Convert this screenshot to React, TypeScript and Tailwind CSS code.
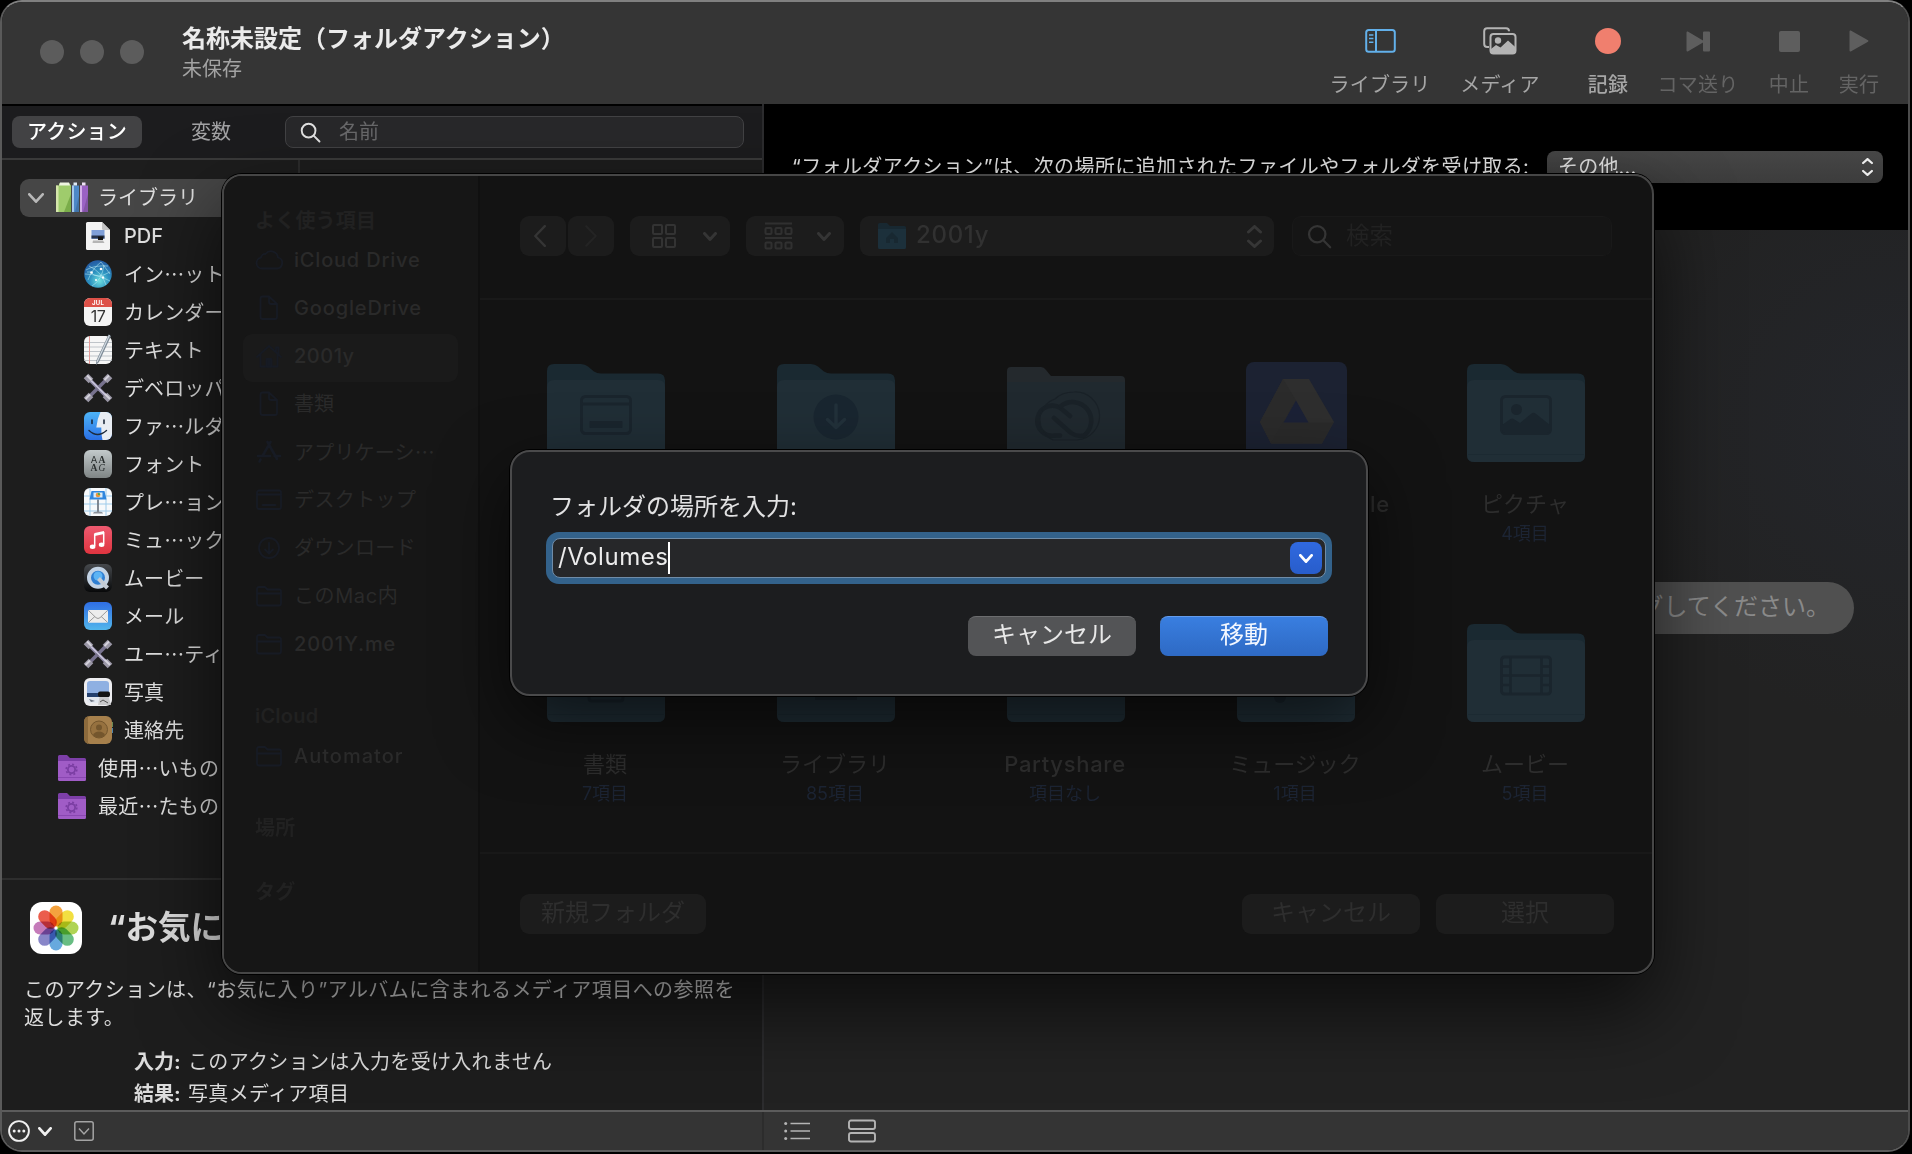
import React from "react";

const UI = "font-['Inter','Noto_Sans_CJK_JP',sans-serif]";
const JP = "font-['Noto_Sans_CJK_JP',sans-serif]";

/* ---------- small shared glyphs ---------- */

function Magnifier({ size, color, w = 2 }: { size: number; color: string; w?: number }) {
  return (
    <svg width={size} height={size} viewBox="0 0 22 22" fill="none" stroke={color} strokeWidth={w} strokeLinecap="round">
      <circle cx="9" cy="9" r="7.2" />
      <path d="M14.3 14.3 20.4 20.4" />
    </svg>
  );
}

function Chevron({ w, h, color, sw }: { w: number; h: number; color: string; sw: number }) {
  return (
    <svg width={w} height={h} viewBox={`0 0 ${w} ${h}`} fill="none" stroke={color} strokeWidth={sw} strokeLinecap="round" strokeLinejoin="round">
      <path d={`M${sw / 2} ${sw / 2} L${w / 2} ${h - sw / 2} L${w - sw / 2} ${sw / 2}`} />
    </svg>
  );
}

function UpDown({ w, h, color, sw }: { w: number; h: number; color: string; sw: number }) {
  const m = w / 2;
  return (
    <svg width={w} height={h} viewBox={`0 0 ${w} ${h}`} fill="none" stroke={color} strokeWidth={sw} strokeLinecap="round" strokeLinejoin="round">
      <path d={`M${sw / 2} ${m - 0.5} L${m} ${sw / 2} L${w - sw / 2} ${m - 0.5} M${sw / 2} ${h - m + 0.5} L${m} ${h - sw / 2} L${w - sw / 2} ${h - m + 0.5}`} />
    </svg>
  );
}

/* ---------- window toolbar ---------- */

const tools = [
  {
    label: "ライブラリ",
    cls: "w-[100px] mr-[30px] text-[#a6a6a6]",
    icon: (
      <svg width="31" height="24" viewBox="0 0 31 24" fill="none" stroke="#62b0ea" strokeWidth="2">
        <rect x="1.2" y="1" width="28.6" height="21.8" rx="2.5" />
        <path d="M11 1V23" />
        <path d="M4 6h4.4M4 9.6h4.4M4 13.2h4.4" strokeWidth="1.5" />
      </svg>
    ),
  },
  {
    label: "メディア",
    cls: "w-[80px] mr-[48px] text-[#a6a6a6]",
    icon: (
      <svg width="34" height="28" viewBox="0 0 34 28" fill="none">
        <path d="M6 20H4.2A3 3 0 0 1 1.2 17V4.2a3 3 0 0 1 3-3H23a3 3 0 0 1 3 3" stroke="#b4b4b4" strokeWidth="2" />
        <rect x="7.5" y="7" width="25" height="19.5" rx="3" stroke="#b4b4b4" strokeWidth="2" />
        <circle cx="15" cy="13.5" r="3.2" fill="#b4b4b4" />
        <path d="M8 24.5V22l5-4 4.5 2.5 7.5-7 7.5 6.8V24.5a2 2 0 0 1-2 2H10a2 2 0 0 1-2-2z" fill="#b4b4b4" />
      </svg>
    ),
  },
  {
    label: "記録",
    cls: "w-[40px] mr-[30px] text-[#a6a6a6] font-medium",
    icon: <div className="size-[26px] rounded-full bg-[#f07f6e]" />,
  },
  {
    label: "コマ送り",
    cls: "w-[80px] mr-[31px] text-[#646464]",
    icon: (
      <svg width="25" height="21" viewBox="0 0 25 21" fill="#5e5e5e">
        <path d="M.5 1.6C.5.5 1.3.2 2.2.8L17 9.6V1.6q0-1 1-1h5q1 0 1 1v17.8q0 1-1 1h-5q-1 0-1-1V11.400L2.200 20.200C1.300 20.800.5 20.500.5 19.400z" />
      </svg>
    ),
  },
  {
    label: "中止",
    cls: "w-[40px] mr-[30px] text-[#646464]",
    icon: <div className="size-[21px] rounded-[2px] bg-[#5e5e5e]" />,
  },
  {
    label: "実行",
    cls: "w-[40px] text-[#646464]",
    icon: (
      <svg width="20" height="22" viewBox="0 0 20 22" fill="#5e5e5e">
        <path d="M.5 1.6C.5.500 1.300.2 2.200.8L19 10.200q1 .8 0 1.600L2.200 21.200C1.300 21.800.5 21.500.5 20.400z" />
      </svg>
    ),
  },
];

function TitleBar() {
  return (
    <header className="flex h-[102px] shrink-0 items-start bg-[#353535]">
      <div className="flex gap-4 pl-[38px] pt-[38px]">
        {[0, 1, 2].map((i) => (
          <div key={i} className="size-6 rounded-full bg-[#5c5c5c]" />
        ))}
      </div>
      <div className="ml-[38px] pt-5">
        <div className="h-8 text-[24px] leading-[34px] font-bold text-[#ebebeb]">名称未設定（フォルダアクション）</div>
        <div className="mt-px text-[20px] leading-[28px] text-[#a3a3a3]">未保存</div>
      </div>
      <div className="ml-auto flex pr-[29px]">
        {tools.map((t) => (
          <div key={t.label} className={`flex flex-col items-center whitespace-nowrap ${t.cls}`}>
            <div className="mt-6 flex h-[30px] items-center">{t.icon}</div>
            <div className="mt-[13px] text-[20px] leading-[32px] tracking-[0.2px]">{t.label}</div>
          </div>
        ))}
      </div>
    </header>
  );
}

/* ---------- library icons ---------- */

const Svg = ({ children, w = 28, h = 28 }: { children: React.ReactNode; w?: number; h?: number }) => (
  <svg width={w} height={h} viewBox={`0 0 ${w} ${h}`} fill="none" className="shrink-0 overflow-visible">
    {children}
  </svg>
);

const BooksIcon = () => (
  <Svg w={32} h={32}>
    <path d="M3 1.500h10V30H3z" fill="#8fc25c" />
    <path d="M0 3.500h3l1-2.500h9l2 2.500V30H0z" fill="#9fcc6c" />
    <path d="M0 3.500h2.500V30H0z" fill="#d5e6ac" />
    <path d="M15 12 8 30h7z" fill="#6ba03c" opacity=".7" />
    <path d="M4 .5h9l1 3H3z" fill="#eef4e0" />
    <path d="M16 3.500h7V30h-7z" fill="#4c88c6" />
    <path d="M16 3.500h2V30h-2z" fill="#a5c8ec" />
    <path d="M17.500.5h3.500v3h-3.500z" fill="#dfeaf6" />
    <path d="M24 3.500h8V30h-8z" fill="#9a62c4" />
    <path d="M24 3.500h2V30h-2z" fill="#d2afe8" />
    <path d="M26 .5h3.500v3H26z" fill="#efe2f6" />
    <path d="M32 12 27 30h5zM23 14l-4 16h4z" fill="#000" opacity=".15" />
  </Svg>
);

const PdfIcon = () => (
  <Svg>
    <path d="M2 1.500Q2 0 3.500 0H18l8 8v18.500q0 1.500-1.500 1.500h-21Q2 28 2 26.500z" fill="#f3f3f3" />
    <path d="M18 0v6.500Q18 8 19.500 8H26z" fill="#c4c4c4" />
    <rect x="7.500" y="8" width="13" height="9" fill="#7f9fd8" />
    <path d="M7.500 13.500h13v3h-13z" fill="#27344c" />
    <path d="M9 18.500h10l1.500 2.500h-12z" fill="#b5b5b5" />
    <path d="M14 14.500h5v3.500h-5z" fill="#151515" />
  </Svg>
);

const GlobeIcon = () => (
  <Svg>
    <defs>
      <radialGradient id="globe" cx=".55" cy=".75" r=".7">
        <stop offset="0" stopColor="#6fe0e0" />
        <stop offset=".5" stopColor="#2d93c0" />
        <stop offset="1" stopColor="#2560a6" />
      </radialGradient>
    </defs>
    <circle cx="14" cy="14" r="13.800" fill="url(#globe)" />
    <path
      d="M2 10Q10 5 24 6M4 20Q8 9 17 2M8 26Q18 20 20 5M1 14Q13 14 26 21M5 6Q18 12 22 25M7 12Q12 20 26 12M3 12l4 0M17 2q6 8 9 12"
      stroke="#bdeef6"
      strokeWidth=".7"
      opacity=".75"
    />
    <g fill="#fff">
      <circle cx="7.500" cy="12.500" r="1.300" />
      <circle cx="17" cy="9" r="1.300" />
      <circle cx="19" cy="17.500" r="1.200" />
      <circle cx="12" cy="20" r="1" />
    </g>
  </Svg>
);

const CalendarIcon = () => (
  <div className="flex size-7 shrink-0 flex-col items-center overflow-hidden rounded-[6px] bg-[#f4f4f4]">
    <div className="flex h-[9px] w-full shrink-0 items-center justify-center bg-[#dd5148] text-[6px] leading-none font-bold tracking-[0.3px] text-white">JUL</div>
    <div className="text-[16px] leading-[18px] tracking-[-0.5px] text-[#333]">17</div>
  </div>
);

const TextEditIcon = () => (
  <Svg>
    <rect width="28" height="28" rx="6" fill="#f6f6f6" />
    <path d="M0 6.500h28M0 11h28M0 15.500h28M0 20h28M0 24.500h28" stroke="#b9bec4" strokeWidth=".9" />
    <path d="M5.500 0v28" stroke="#e29a97" />
    <path d="M24.500-1.500 27 0 15 26l-3 3 .3-4.500z" fill="#7d8a96" />
    <path d="M25.500-1 13 26" stroke="#d5dde4" strokeWidth="1.100" />
  </Svg>
);

const WrenchIcon = () => (
  <Svg>
    <path d="M4 4 24 24" stroke="#8d88a4" strokeWidth="3.600" />
    <path d="M24 4 4 24" stroke="#77728e" strokeWidth="3.600" />
    <path d="M4 3.500 24 23.500" stroke="#cfcbe0" strokeWidth="1.200" />
    <g stroke="#9a97a6" strokeWidth="6.500">
      <path d="M2 2l5 5M26 2l-5 5M2 26l5-5M26 26l-5-5" />
    </g>
    <g stroke="#d4d2dc" strokeWidth="2">
      <path d="M3 1.500l4.500 4.500M25 1.500l-4.500 4.500M1.500 25l4.500-4.500M21 20l5 5" />
    </g>
  </Svg>
);

const FinderIcon = () => (
  <Svg>
    <defs>
      <linearGradient id="fnd" x1="0" y1="0" x2="0" y2="1">
        <stop offset="0" stopColor="#4db4f8" />
        <stop offset="1" stopColor="#2a6fe4" />
      </linearGradient>
      <clipPath id="fndc">
        <rect width="28" height="28" rx="6" />
      </clipPath>
    </defs>
    <g clipPath="url(#fndc)">
      <rect width="28" height="28" fill="url(#fnd)" />
      <path d="M16.500 0Q13 7 12.300 15.500h5Q17 22 18.500 28H28V0z" fill="#e8edf3" />
      <path d="M8 8v3.500M20 8v3.500" stroke="#1c2a3c" strokeWidth="1.600" strokeLinecap="round" />
      <path d="M5 18.500Q13.500 26.500 22.500 18.500" stroke="#1c2a3c" strokeWidth="1.400" strokeLinecap="round" />
    </g>
  </Svg>
);

const FontBookIcon = () => (
  <div className="grid size-7 shrink-0 grid-cols-2 content-center justify-items-center rounded-[6px] bg-linear-to-b from-[#c3cacb] to-[#7f8585] px-[6px] text-[9.500px] leading-[8.500px] text-[#2b3030]">
    <span>A</span>
    <span className="font-['Liberation_Serif',serif] font-bold">A</span>
    <span className="font-['Liberation_Serif',serif] font-bold">A</span>
    <span className="font-['Liberation_Serif',serif] italic">G</span>
  </div>
);

const KeynoteIcon = () => (
  <Svg>
    <rect width="28" height="28" rx="6" fill="#f7f9fb" />
    <path d="M0 8h28M0 16h28M0 23h28M6 0v28M22 0v28" stroke="#9ecbea" strokeWidth="1" />
    <path d="M7.500 3h13l2 8.500H5.500z" fill="#2f86de" />
    <rect x="9.500" y="4.500" width="9" height="5" fill="#dcebf8" />
    <circle cx="14" cy="7" r="2.300" fill="#e9953a" />
    <path d="M14 4.700A2.300 2.300 0 0 1 16.300 7H14z" fill="#4caa52" />
    <path d="M14 11.500V24" stroke="#747c86" strokeWidth="1.800" />
    <path d="M9 25.500q0-2 5-2t5 2z" fill="#8b929b" />
  </Svg>
);

const MusicIcon = () => (
  <Svg>
    <defs>
      <linearGradient id="mus" x1="0" y1="0" x2="0" y2="1">
        <stop offset="0" stopColor="#ee5a70" />
        <stop offset="1" stopColor="#e0343f" />
      </linearGradient>
    </defs>
    <rect width="28" height="28" rx="6" fill="url(#mus)" />
    <path d="M10.700 7 20 5v3l-9.300 2z" fill="#fff" />
    <path d="M10.700 7.500V20M19.700 6v12" stroke="#fff" strokeWidth="1.500" />
    <ellipse cx="8.600" cy="20.700" rx="2.800" ry="2.200" fill="#fff" />
    <ellipse cx="17.600" cy="18.700" rx="2.800" ry="2.200" fill="#fff" />
  </Svg>
);

const QuickTimeIcon = () => (
  <Svg>
    <defs>
      <linearGradient id="qt" x1="0" y1="0" x2="0" y2="1">
        <stop offset="0" stopColor="#46494d" />
        <stop offset="1" stopColor="#08090a" />
      </linearGradient>
    </defs>
    <rect width="28" height="28" rx="6" fill="url(#qt)" />
    <circle cx="14" cy="13.800" r="9" fill="#2f7fd2" stroke="#c3d3e4" strokeWidth="4" />
    <circle cx="14" cy="12" r="4.500" fill="#5cb4f4" />
    <path d="M14.500 14.500 23.500 24" stroke="#c3cbd4" strokeWidth="4" />
  </Svg>
);

const MailIcon = () => (
  <Svg>
    <defs>
      <linearGradient id="mail" x1="0" y1="0" x2="0" y2="1">
        <stop offset="0" stopColor="#2f6ee4" />
        <stop offset="1" stopColor="#52b6ec" />
      </linearGradient>
    </defs>
    <rect width="28" height="28" rx="6" fill="url(#mail)" />
    <rect x="4" y="8" width="20" height="12.800" rx="1.500" fill="#ececec" />
    <path d="m4.500 8.500 7.500 7.200q2 1.600 4 0l7.500-7.200M4.500 20.300l6.500-6M23.500 20.300l-6.500-6" stroke="#9a9a9a" strokeWidth="1" />
  </Svg>
);

const PreviewIcon = () => (
  <Svg>
    <rect width="28" height="28" rx="6" fill="#ededf0" />
    <path d="M3 6q0-3 3-3h16q3 0 3 3v10H3z" fill="#8fb0e2" />
    <path d="M3 15h22v5H3z" fill="#24406e" />
    <path d="M3 19h22v3q0 3-3 3H6q-3 0-3-3z" fill="#e3e8f0" />
    <path d="M5 21l6 2-4 1zM9 19l5 2" fill="#6d7684" />
    <rect x="14" y="13.500" width="12" height="5.500" rx="2" fill="#141414" />
    <path d="M15.500 19h9l2.500 8H14z" fill="#c9c9cb" />
    <path d="m16 24 3-2 5 3" stroke="#555" />
  </Svg>
);

const ContactsIcon = () => (
  <Svg>
    <path d="M26 6h3v5h-3z" fill="#6a8a56" />
    <path d="M26 12h3v5h-3z" fill="#4d84ac" />
    <rect width="28" height="28" rx="6" fill="#a6804c" />
    <path d="M0 6q0-6 6-6h-2v28h2q-6 0-6-6z" fill="#8c6a3c" />
    <circle cx="15" cy="13.500" r="8.500" fill="#96713f" stroke="#74562d" strokeWidth="1" />
    <circle cx="15" cy="11.500" r="3" fill="#74562d" />
    <path d="M9 19q1.500-3.600 6-3.600t6 3.600q-2.500 2.800-6 2.800T9 19z" fill="#74562d" />
  </Svg>
);

const SmartFolderIcon = () => (
  <Svg w={28} h={26}>
    <path d="M0 1.500Q0 0 1.500 0H9l3 3h14.500Q28 3 28 4.500V24q0 2-1.500 2h-25Q0 26 0 24z" fill="#7d3fa8" />
    <path d="M0 6h28v18q0 2-1.500 2h-25Q0 26 0 24z" fill="#a05cc6" />
    <path d="M0 22.500h28" stroke="#8a47b2" />
    <circle cx="13.500" cy="14.500" r="3.600" stroke="#7b3ea3" strokeWidth="1.800" />
    <circle cx="13.500" cy="14.500" r="5.300" stroke="#7b3ea3" strokeWidth="1.600" strokeDasharray="2 2.160" />
  </Svg>
);

const library: { icon: React.ReactNode; label: string; latin?: boolean }[] = [
  { icon: <PdfIcon />, label: "PDF", latin: true },
  { icon: <GlobeIcon />, label: "イン…ット" },
  { icon: <CalendarIcon />, label: "カレンダー" },
  { icon: <TextEditIcon />, label: "テキスト" },
  { icon: <WrenchIcon />, label: "デベロッパ" },
  { icon: <FinderIcon />, label: "ファ…ルダ" },
  { icon: <FontBookIcon />, label: "フォント" },
  { icon: <KeynoteIcon />, label: "プレ…ョン" },
  { icon: <MusicIcon />, label: "ミュ…ック" },
  { icon: <QuickTimeIcon />, label: "ムービー" },
  { icon: <MailIcon />, label: "メール" },
  { icon: <WrenchIcon />, label: "ユー…ティ" },
  { icon: <PreviewIcon />, label: "写真" },
  { icon: <ContactsIcon />, label: "連絡先" },
];

const petals = ["#f39a2d", "#f1dd31", "#a9cf46", "#5bb878", "#5aa2dc", "#7e7cc4", "#c070b4", "#ea4f3c"];

function PhotosIcon() {
  return (
    <svg width="52" height="52" viewBox="0 0 52 52" className="shrink-0">
      <rect width="52" height="52" rx="12" fill="#fff" />
      <g className="isolate">
        {petals.map((c, i) => (
          <rect key={c} x="19.500" y="3.500" width="13" height="21" rx="6.500" fill={c} opacity=".92" transform={`rotate(${i * 45} 26 26)`} className="mix-blend-multiply" />
        ))}
      </g>
    </svg>
  );
}

function LeftPane() {
  return (
    <section className="flex w-[760px] shrink-0 flex-col bg-[#1d1d1d]">
      <div className="flex h-[56px] shrink-0 items-center border-t-2 border-b-2 border-t-black border-b-[#3a3a3a] bg-[#1c1c1e] pl-[10px] text-[20px]">
        <div className="flex h-8 w-[130px] items-center justify-center rounded-[8px] bg-[#424244] font-medium tracking-[0.2px] text-white">アクション</div>
        <div className="ml-[49px] text-[#a2a2a4]">変数</div>
        <div className="ml-[54px] flex h-8 w-[459px] items-center rounded-[8px] border border-[#424244] bg-[#28282a] pl-[14px] text-[#68686a]">
          <Magnifier size={21} color="#e0e0e0" />
          <span className="ml-[18px]">名前</span>
        </div>
      </div>
      <div className="flex min-h-0 flex-1">
        <div className="w-[298px] border-r-2 border-[#2c2c2c] pt-[19px] pl-[18px] text-[20px] text-[#dedede]">
          <div className="flex h-[38px] items-center rounded-l-[9px] bg-[#464646] pl-2">
            <Chevron w={16} h={10} color="#b8b8b8" sw={2.600} />
            <div className="ml-3">
              <BooksIcon />
            </div>
            <span className="ml-[10px]">ライブラリ</span>
          </div>
          {library.map((r) => (
            <div key={r.label} className="flex h-[38px] items-center pl-[64px] whitespace-nowrap">
              {r.icon}
              <span className={r.latin ? "ml-3 font-medium" : `mb-px ml-3 tracking-[0.1px] ${JP}`}>{r.label}</span>
            </div>
          ))}
          {["使用…いもの", "最近…たもの"].map((t) => (
            <div key={t} className="flex h-[38px] items-center pl-[38px] whitespace-nowrap">
              <SmartFolderIcon />
              <span className={`mb-px ml-3 tracking-[0.2px] ${JP}`}>{t}</span>
            </div>
          ))}
        </div>
      </div>
      <div className="h-[232px] shrink-0 border-t-2 border-[#2e2e2e] text-[#dcdcdc]">
        <div className="flex items-center pt-[22px] pl-7">
          <PhotosIcon />
          <h2 className="ml-[26px] text-[32.500px] leading-[44px] font-bold whitespace-nowrap">“お気に入り”の項目を取得</h2>
        </div>
        <p className="mt-[22px] pl-[22px] text-[20px] leading-[28px] tracking-[0.440px] whitespace-nowrap">
          このアクションは、“お気に入り”アルバムに含まれるメディア項目への参照を
          <br />
          返します。
        </p>
        <div className="mt-[14px] pl-[132px] text-[20px] leading-[32px] tracking-[0.330px]">
          <div className="flex">
            <b className="w-[54px] tracking-normal">入力:</b>このアクションは入力を受け入れません
          </div>
          <div className="flex">
            <b className="w-[54px] tracking-normal">結果:</b>写真メディア項目
          </div>
        </div>
      </div>
    </section>
  );
}

function RightPane() {
  return (
    <section className="flex min-w-0 flex-1 flex-col border-l-2 border-[#2c2c2e] bg-[radial-gradient(circle_at_100%_32%,#24262b_0,#222222_300px)]">
      <div className="flex h-[126px] shrink-0 items-start bg-black pt-[47px] text-[20px]">
        <div className="ml-[28px] w-[737px] leading-[32px] tracking-[0.390px] whitespace-nowrap text-[#e6e6e6]">“フォルダアクション”は、次の場所に追加されたファイルやフォルダを受け取る:</div>
        <div className="ml-[18px] flex h-8 w-[336px] items-center rounded-[8px] bg-linear-to-b from-[#464646] to-[#3c3c3c] pr-[10px] pl-[11px] text-[#e2e2e2]">
          <span className="flex-1 tracking-[0.2px]">その他...</span>
          <UpDown w={11} h={18} color="#ececec" sw={2.200} />
        </div>
      </div>
      <div className="flex flex-1 items-start justify-end pt-[352px] pr-[54px]">
        <div className="flex h-[52px] items-center rounded-full bg-[#505050] px-6 pb-0.5 text-[24px] whitespace-nowrap text-[#8a8a8a]">
          ワークフローを作成するには、ここにアクションまたはファイルをドラッグしてください。
        </div>
      </div>
    </section>
  );
}

function BottomBar() {
  return (
    <footer className="flex h-[40px] shrink-0 border-t-2 border-[#5c5c5c] bg-[#343434]">
      <div className="flex w-[762px] items-center border-r-2 border-[#2c2c2c] pl-[6px]">
        <svg width="22" height="22" viewBox="0 0 22 22" fill="none">
          <circle cx="11" cy="11" r="9.900" stroke="#f0f0f0" strokeWidth="1.900" />
          <circle cx="6.200" cy="11" r="1.500" fill="#f0f0f0" />
          <circle cx="11" cy="11" r="1.500" fill="#f0f0f0" />
          <circle cx="15.800" cy="11" r="1.500" fill="#f0f0f0" />
        </svg>
        <div className="ml-2">
          <Chevron w={14} h={9} color="#f0f0f0" sw={2.800} />
        </div>
        <svg width="20" height="20" viewBox="0 0 20 20" fill="none" stroke="#a4a4a4" strokeWidth="1.500" className="ml-[22px]">
          <rect x=".8" y=".8" width="18.400" height="18.400" rx="2" />
          <path d="m5 7.500 5 5.500 5-5.500" />
        </svg>
      </div>
      <div className="flex items-center gap-[38px] pl-[20px]">
        <svg width="26" height="20" viewBox="0 0 26 20" stroke="#b4b4b4" strokeWidth="1.700" fill="#b4b4b4">
          <path d="M6.500 2.500H26M6.500 10H26M6.500 17.500H26" />
          <g stroke="none">
            <circle cx="1.700" cy="2.500" r="1.500" />
            <circle cx="1.700" cy="10" r="1.500" />
            <circle cx="1.700" cy="17.500" r="1.500" />
          </g>
        </svg>
        <svg width="28" height="24" viewBox="0 0 28 24" fill="none" stroke="#b4b4b4" strokeWidth="1.900">
          <rect x="1" y="1.500" width="26" height="8.500" rx="2" />
          <rect x="1" y="14" width="26" height="8.500" rx="2" />
        </svg>
      </div>
    </footer>
  );
}

/* ---------- open panel (dimmed) ---------- */

const ink = "#171b24";
const Side = ({ children }: { children: React.ReactNode }) => (
  <svg width="28" height="26" viewBox="0 0 28 26" fill="none" stroke={ink} strokeWidth="1.800" strokeLinejoin="round" strokeLinecap="round" className="mr-[11px] shrink-0">
    {children}
  </svg>
);
const cloud = <path d="M7 21.500a5.500 5.500 0 0 1-1-10.900A4 4 0 0 1 10.500 7 7 7 0 0 1 23 10.500a5.600 5.600 0 0 1-1 11z" />;
const doc = <path d="M5.500 3.500q0-2 2-2H14l8 7.500v13q0 2-2 2H7.500q-2 0-2-2zM14 1.500V7q0 2 2 2h6" />;
const house = (
  <>
    <path d="M2 14 14 3l12 11M5.500 12v11.500h17V12M21 8V4.500h2.500v6" />
    <path d="M11.500 23.500V16h5v7.500z" fill={ink} />
  </>
);
const apps = <path d="M15.500 3 7.500 17M12.500 3 22 20M3 17h12M19.500 17H25M5.500 20.500 4.500 22.500" strokeWidth="2.600" />;
const desktop = (
  <>
    <rect x="2" y="3.500" width="24" height="18.500" rx="2" />
    <path d="M2 7.500h24M7.500 18h13" strokeWidth="2" />
  </>
);
const down = (
  <>
    <circle cx="14" cy="13" r="10" />
    <path d="M14 8v10M10 14.500l4 4 4-4" />
  </>
);
const folder = <path d="M2 20.500V6q0-2 2-2h6l2.500 2.500H24q2 0 2 2v12q0 2-2 2H4q-2 0-2-2zM2 10.500h24" />;

function SideRow({ icon, label, active, cls = "" }: { icon: React.ReactNode; label: string; active?: boolean; cls?: string }) {
  return (
    <div className={active ? "flex h-12 items-center rounded-[9px] bg-[#1a1a1a] pb-1 pl-3" : "flex h-12 items-center pb-1 pl-3"}>
      <Side>{icon}</Side>
      <span className={`text-[20px] whitespace-nowrap text-[#2a2a2a] ${cls}`}>{label}</span>
    </div>
  );
}

function PanelSidebar() {
  const head = "pl-3 text-[20px] leading-[28px] font-semibold tracking-[0.200px] text-[#212121]";
  return (
    <aside className="w-[256px] shrink-0 border-r-2 border-[#101010] bg-[#161616] pt-[31px] pr-[20px] pl-[19px]">
      <div className={head}>よく使う項目</div>
      <div className="h-[3px]" />
      <SideRow icon={cloud} label="iCloud Drive" cls="font-medium tracking-[0.800px]" />
      <SideRow icon={doc} label="GoogleDrive" cls="font-medium tracking-[0.850px]" />
      <SideRow icon={house} label="2001y" active cls="font-medium tracking-[0.500px]" />
      <SideRow icon={doc} label="書類" />
      <SideRow icon={apps} label="アプリケーシ…" cls={`${JP} tracking-[0.200px]`} />
      <SideRow icon={desktop} label="デスクトップ" cls="tracking-[0.400px]" />
      <SideRow icon={down} label="ダウンロード" cls="tracking-[0.300px]" />
      <SideRow icon={folder} label="このMac内" cls="tracking-[0.600px]" />
      <SideRow icon={folder} label="2001Y.me" cls="font-medium tracking-[0.900px]" />
      <div className={`${head} mt-[32px]`}>iCloud</div>
      <div className="h-1" />
      <SideRow icon={folder} label="Automator" cls="font-medium tracking-[1.000px]" />
      <div className={`${head} mt-8`}>場所</div>
      <div className={`${head} mt-9`}>タグ</div>
    </aside>
  );
}

const g = "#1a252d";
function FolderArt({ children, gray }: { children?: React.ReactNode; gray?: boolean }) {
  if (gray)
    return (
      <svg width="118" height="98" viewBox="0 0 118 98" fill="none">
        <path d="M0 7q0-4 4-4h30q3 0 5 3l5 6h70q4 0 4 4v76q0 5-5 5H5q-5 0-5-5z" fill="#24292d" />
        <path d="M0 18h118v74q0 5-5 5H5q-5 0-5-5z" fill="#20292f" />
        {children}
      </svg>
    );
  return (
    <svg width="118" height="98" viewBox="0 0 118 98" fill="none">
      <path d="M0 7q0-7 7-7h27q4 0 7 2.500L47 7.500q3 2 7 2h57q7 0 7 7V91q0 7-7 7H7q-7 0-7-7z" fill="#1a2931" />
      <path d="M0 23q0-7 7-7h104q7 0 7 7v68q0 7-7 7H7q-7 0-7-7z" fill="#202e36" />
      <path d="M1 90.500h116" stroke="#1c2a32" />
      {children}
    </svg>
  );
}

const glyphDesktop = (
  <>
    <rect x="34.500" y="32.500" width="49" height="37" rx="4" stroke={g} strokeWidth="3" />
    <path d="M35 40h48" stroke={g} strokeWidth="3" />
    <rect x="42.500" y="57" width="33" height="7" rx="1" fill={g} />
  </>
);
const glyphDown = (
  <>
    <circle cx="59" cy="53" r="22.500" fill="#192630" />
    <path d="M59 41v22M50.500 55.500 59 63.500l8.500-8" stroke="#22313a" strokeWidth="3.500" strokeLinecap="round" strokeLinejoin="round" />
  </>
);
const glyphCC = (
  <g stroke="#1a2228" strokeWidth="4.500" strokeLinecap="round">
    <path d="M63 52 54 44.500A15 15 0 1 0 48 71.500h5" />
    <path d="M47 54l17 15q6 4 13 2.500A18.500 18.500 0 1 0 54 42" />
    <path d="M46 76a22 22 0 0 1 2-41q7-7 19-7a24 24 0 0 1 3 48z" strokeWidth="1.200" />
  </g>
);
const glyphPicture = (
  <>
    <rect x="34.500" y="32.500" width="49" height="37" rx="4" stroke={g} strokeWidth="3" />
    <circle cx="49.500" cy="45.500" r="5.500" fill={g} />
    <path d="M35 61l8.500-6q2-1 4 .5l5.500 3.500L64.500 49.500q2-1.500 4 0L83 61v5q0 3-3 3H38q-3 0-3-3z" fill={g} />
  </>
);
const glyphDoc = <path d="M42 28h22l12 12v34q0 3-3 3H45q-3 0-3-3z" stroke={g} strokeWidth="3" />;
const glyphLib = <path d="M38 36 59 26l21 10zM42 40v24M53 40v24M65 40v24M76 40v24M38 74h42" stroke={g} strokeWidth="4" />;
const glyphNote = (
  <>
    <path d="M48 68V36l24-5v30" stroke={g} strokeWidth="4" />
    <circle cx="43" cy="73" r="6" fill={g} />
    <circle cx="67" cy="65" r="6" fill={g} />
  </>
);
const glyphMovie = (
  <>
    <rect x="34.500" y="33" width="49" height="37" rx="3" stroke={g} strokeWidth="3" />
    <path d="M43.500 33v37M74.500 33v37M43.500 51.500h31M35 42.500h8M35 51.500h8M35 61h8M75 42.500h8M75 51.500h8M75 61h8" stroke={g} strokeWidth="2.600" />
  </>
);

const DriveArt = () => (
  <svg width="101" height="100" viewBox="0 0 101 100">
    <rect width="101" height="100" rx="8" fill="#1c2232" />
    <path d="M37 17h26L88 60 76 81.500H25L14 60z" fill="#2e2e2e" />
    <path d="M37 17 50 38.500 25 81.500 14 60z" fill="#2b2b2b" />
    <path d="M37 60.500h50L76 81.500H25z" fill="#2a2a2a" />
    <path d="M50 38.500 62.500 60.500h-25z" fill="#1b2136" />
  </svg>
);

const items: { art: React.ReactNode; name: string; count: string; cls?: string }[] = [
  { art: <FolderArt>{glyphDesktop}</FolderArt>, name: "デスクトップ", count: "" },
  { art: <FolderArt>{glyphDown}</FolderArt>, name: "ダウンロード", count: "" },
  { art: <FolderArt gray>{glyphCC}</FolderArt>, name: "Creative Cloud", count: "" },
  { art: <DriveArt />, name: "Google Drive File", count: "", cls: "font-medium tracking-[0.600px]" },
  { art: <FolderArt>{glyphPicture}</FolderArt>, name: "ピクチャ", count: "4項目" },
  { art: <FolderArt>{glyphDoc}</FolderArt>, name: "書類", count: "7項目" },
  { art: <FolderArt>{glyphLib}</FolderArt>, name: "ライブラリ", count: "85項目" },
  { art: <FolderArt />, name: "Partyshare", count: "項目なし", cls: "font-medium tracking-[0.700px]" },
  { art: <FolderArt>{glyphNote}</FolderArt>, name: "ミュージック", count: "1項目" },
  { art: <FolderArt>{glyphMovie}</FolderArt>, name: "ムービー", count: "5項目" },
];

function PanelToolbar() {
  const btn = "flex h-10 items-center rounded-[9px] bg-[#1c1c1c]";
  return (
    <div className="flex h-[124px] shrink-0 items-start border-b-2 border-[#191919] pt-10 pl-10">
      <div className={`${btn} w-[46px] justify-center pr-[6px]`}>
        <svg width="12" height="22" viewBox="0 0 12 22" fill="none" stroke="#353535" strokeWidth="2.400" strokeLinecap="round" strokeLinejoin="round">
          <path d="M10.800 1.200 1.300 11l9.500 9.800" />
        </svg>
      </div>
      <div className={`${btn} ml-0.5 w-[46px] justify-center`}>
        <svg width="12" height="22" viewBox="0 0 12 22" fill="none" stroke="#242424" strokeWidth="2" strokeLinecap="round" strokeLinejoin="round">
          <path d="M1.200 1.200 10.700 11l-9.500 9.800" />
        </svg>
      </div>
      <div className={`${btn} ml-4 w-[100px] pl-[22px]`}>
        <svg width="24" height="24" viewBox="0 0 24 24" fill="none" stroke="#333" strokeWidth="2">
          <rect x="1" y="1" width="9" height="9" rx="1" />
          <rect x="14" y="1" width="9" height="9" rx="1" />
          <rect x="1" y="14" width="9" height="9" rx="1" />
          <rect x="14" y="14" width="9" height="9" rx="1" />
        </svg>
        <div className="ml-[27px]">
          <Chevron w={14} h={9} color="#353535" sw={3} />
        </div>
      </div>
      <div className={`${btn} ml-4 w-[98px] pl-[18px]`}>
        <svg width="29" height="28" viewBox="0 0 29 28" fill="none" stroke="#303030" strokeWidth="2">
          <path d="M1 1.500h27M1 16h27" />
          {[1.500, 11.500, 21.500].map((x) => (
            <g key={x}>
              <rect x={x} y="6" width="6" height="6" rx="1" />
              <rect x={x} y="20.500" width="6" height="6" rx="1" />
            </g>
          ))}
        </svg>
        <div className="ml-6">
          <Chevron w={14} h={9} color="#353535" sw={3} />
        </div>
      </div>
      <div className={`${btn} ml-4 w-[414px] pr-3 pl-[18px]`}>
        <svg width="28" height="26" viewBox="0 0 28 26">
          <path d="M0 1.500Q0 0 1.500 0H9l3 3h14.500Q28 3 28 4.500V24q0 2-1.500 2h-25Q0 26 0 24z" fill="#182831" />
          <path d="M0 6h28v18q0 2-1.500 2h-25Q0 26 0 24z" fill="#1c303b" />
          <path d="m8 15 6-6 6 6v5h-4v-4h-4v4H8z" fill="#182831" />
        </svg>
        <span className="mb-0.5 ml-[10px] flex-1 text-[24px] font-medium tracking-[0.700px] text-[#313131]">2001y</span>
        <UpDown w={15} h={23} color="#363636" sw={3} />
      </div>
      <div className="ml-[18px] flex h-10 w-[320px] items-center rounded-[9px] border border-[#191919] bg-[#151515] pl-[14px] text-[23.500px] text-[#212121]">
        <Magnifier size={25} color="#353535" w={2} />
        <span className="ml-[14px]">検索</span>
      </div>
    </div>
  );
}

function OpenPanel() {
  const btn = "flex h-10 items-center justify-center rounded-[9px] bg-[#1c1c1c] pb-[3px] text-[24px] text-[#2e2e2e]";
  return (
    <div className="absolute top-[172px] left-[220px] flex h-[800px] w-[1432px] overflow-hidden rounded-[20px] border-2 border-[#464646] bg-[#131313]">
      <PanelSidebar />
      <div className="flex flex-1 flex-col">
        <PanelToolbar />
        <div className="grid min-h-0 flex-1 grid-cols-[repeat(5,230px)] grid-rows-[260px_230px] pt-[62px] pl-[11px]">
          {items.map((it) => (
            <div key={it.name} className="flex flex-col items-center whitespace-nowrap">
              <div className="flex h-[100px] shrink-0 items-end">{it.art}</div>
              <div className={`mt-[28px] mr-0.5 h-[30px] shrink-0 text-[22px] leading-[28px] text-[#2d2d2d] ${it.cls ?? ""}`}>{it.name}</div>
              <div className="mt-0.5 mr-0.5 text-[18px] leading-[24px] text-[#1c2433]">{it.count}</div>
            </div>
          ))}
        </div>
        <div className="flex h-[120px] shrink-0 border-t-2 border-[#181818] pt-10 pr-[38px] pl-10">
          <div className={`${btn} w-[186px]`}>新規フォルダ</div>
          <div className={`${btn} ml-auto w-[178px]`}>キャンセル</div>
          <div className={`${btn} ml-4 w-[178px]`}>選択</div>
        </div>
      </div>
    </div>
  );
}

/* ---------- go-to-folder sheet ---------- */

function GoToDialog() {
  return (
    <div className="absolute top-[448px] left-[508px] h-[246px] w-[858px] rounded-[20px] border-2 border-[#4a4a4b] bg-[#1c1d1f] px-[34px] pt-[38px] shadow-[0_0_0_1px_#000,0_26px_70px_rgba(0,0,0,0.6)]">
      <div className="pl-1 text-[24px] leading-[34px] text-[#e2e2e3]">フォルダの場所を入力:</div>
      <div className="mt-[8px] flex h-[52px] w-[786px] items-center rounded-[13px] bg-[#33628b] p-[6px]">
        <div className="flex h-10 flex-1 items-center rounded-[8px] border border-[#6f8ca8] bg-[#262729] pr-[3px] pl-[5px] text-[24px] text-[#ececec]">
          <span className="mb-0.5 tracking-[0.550px]">/Volumes</span>
          <span className="h-8 w-0.5 bg-white" />
          <div className="ml-auto flex size-8 items-center justify-center rounded-[8px] bg-linear-to-b from-[#3069df] to-[#285dcb]">
            <Chevron w={14} h={9} color="#fff" sw={2.800} />
          </div>
        </div>
      </div>
      <div className="mt-8 flex justify-end gap-6 pr-[4px] text-[24px]">
        <div className="flex h-10 w-[168px] items-center justify-center rounded-[8px] border-t border-[#6c6d6f] bg-[#535456] pb-1 text-[#e8e8e8]">キャンセル</div>
        <div className="flex h-10 w-[168px] items-center justify-center rounded-[8px] border-t border-[#649ceb] bg-linear-to-b from-[#397ee0] to-[#2e6ac4] pb-1 text-[#f4f8ff]">移動</div>
      </div>
    </div>
  );
}

export default function App() {
  return (
    <div lang="ja" className={`h-[1154px] w-[1912px] overflow-hidden bg-black ${UI}`}>
      <div className="relative flex h-[1152px] w-[1910px] flex-col overflow-hidden rounded-[22px] border-2 border-t-[#808080] border-r-[#4c4c4c] border-b-[#5c5c5c] border-l-[#5a5a5a] bg-[#1d1d1d]">
        <TitleBar />
        <div className="flex min-h-0 flex-1">
          <LeftPane />
          <RightPane />
        </div>
        <BottomBar />
        <div className="absolute top-[172px] left-[220px] h-[800px] w-[1432px] rounded-[20px] shadow-[0_0_0_1px_#000,0_34px_80px_rgba(0,0,0,0.650)]" />
        <OpenPanel />
        <GoToDialog />
      </div>
    </div>
  );
}
